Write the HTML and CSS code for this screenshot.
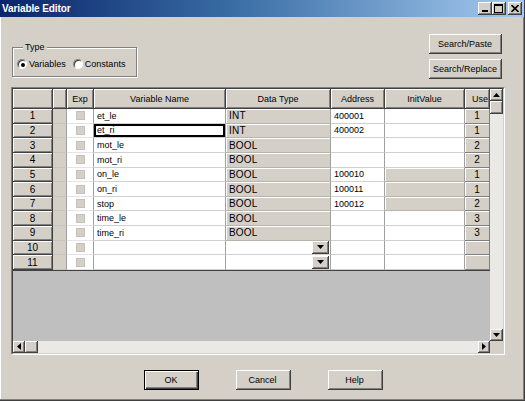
FILE: index.html
```html
<!DOCTYPE html>
<html>
<head>
<meta charset="utf-8">
<link rel="stylesheet" href="styles.css">
</head>
<body>
<div class="window">
  <div class="titlebar">
    <span class="title">Variable Editor</span>
    <div class="tbtns">
      <span class="tbtn"><svg width="8" height="7" viewBox="0 0 8 7"><rect x="1" y="5" width="6" height="2" fill="#000"/></svg></span>
      <span class="tbtn"><svg width="9" height="9" viewBox="0 0 9 9"><rect x="0.5" y="0.5" width="8" height="8" fill="none" stroke="#000"/><rect x="0" y="0" width="9" height="2" fill="#000"/></svg></span>
      <span class="tbtn close"><svg width="8" height="7" viewBox="0 0 8 7"><path d="M0.5 0 L7.5 7 M7.5 0 L0.5 7" stroke="#000" stroke-width="1.6"/></svg></span>
    </div>
  </div>

  <div class="top">
    <fieldset class="group">
      <legend>Type</legend>
      <div class="radios">
        <span class="radio"><span class="dot on"></span>Variables</span>
        <span class="radio"><span class="dot"></span>Constants</span>
      </div>
    </fieldset>
    <div class="sidebtns">
      <span class="btn">Search/Paste</span>
      <span class="btn">Search/Replace</span>
    </div>
  </div>

  <div class="sheet">
    <div class="sheet-in">
      <div class="cells">
        <div class="table">
          <div class="hd"></div><div class="hd"></div><div class="hd">Exp</div><div class="hd">Variable Name</div><div class="hd">Data Type</div><div class="hd">Address</div><div class="hd">InitValue</div><div class="hd left">Use</div>

          <div class="rh">1</div><div class="nr"></div><div class="exp"><i class="cb"></i></div><div class="w">et_le</div><div class="g dt">INT</div><div class="w">400001</div><div class="w"></div><div class="u">1</div>
          <div class="rh">2</div><div class="nr"></div><div class="exp"><i class="cb"></i></div><div class="w focus">et_ri</div><div class="g dt">INT</div><div class="w">400002</div><div class="w"></div><div class="u">1</div>
          <div class="rh">3</div><div class="nr"></div><div class="exp"><i class="cb"></i></div><div class="w">mot_le</div><div class="g dt">BOOL</div><div class="w"></div><div class="w"></div><div class="u">2</div>
          <div class="rh">4</div><div class="nr"></div><div class="exp"><i class="cb"></i></div><div class="w">mot_ri</div><div class="g dt">BOOL</div><div class="w"></div><div class="w"></div><div class="u">2</div>
          <div class="rh">5</div><div class="nr"></div><div class="exp"><i class="cb"></i></div><div class="w">on_le</div><div class="g dt">BOOL</div><div class="w">100010</div><div class="g"></div><div class="u">1</div>
          <div class="rh">6</div><div class="nr"></div><div class="exp"><i class="cb"></i></div><div class="w">on_ri</div><div class="g dt">BOOL</div><div class="w">100011</div><div class="g"></div><div class="u">1</div>
          <div class="rh">7</div><div class="nr"></div><div class="exp"><i class="cb"></i></div><div class="w">stop</div><div class="g dt">BOOL</div><div class="w">100012</div><div class="g"></div><div class="u">2</div>
          <div class="rh">8</div><div class="nr"></div><div class="exp"><i class="cb"></i></div><div class="w">time_le</div><div class="g dt">BOOL</div><div class="w"></div><div class="w"></div><div class="u">3</div>
          <div class="rh">9</div><div class="nr"></div><div class="exp"><i class="cb"></i></div><div class="w">time_ri</div><div class="g dt">BOOL</div><div class="w"></div><div class="w"></div><div class="u">3</div>
          <div class="rh">10</div><div class="nr"></div><div class="exp"><i class="cb"></i></div><div class="w"></div><div class="w combo"><span class="drop"><svg width="7" height="4" viewBox="0 0 7 4"><path d="M0 0 H7 L3.5 4 Z" fill="#000"/></svg></span></div><div class="w"></div><div class="w"></div><div class="u"></div>
          <div class="rh">11</div><div class="nr"></div><div class="exp"><i class="cb"></i></div><div class="w"></div><div class="w combo"><span class="drop"><svg width="7" height="4" viewBox="0 0 7 4"><path d="M0 0 H7 L3.5 4 Z" fill="#000"/></svg></span></div><div class="w"></div><div class="w"></div><div class="u"></div>
        </div>
      </div>
      <div class="vscroll">
        <span class="sbtn"><svg width="7" height="4" viewBox="0 0 7 4"><path d="M0 4 H7 L3.5 0 Z" fill="#000"/></svg></span>
        <span class="thumb v"></span>
        <span class="track"></span>
        <span class="sbtn"><svg width="7" height="4" viewBox="0 0 7 4"><path d="M0 0 H7 L3.5 4 Z" fill="#000"/></svg></span>
      </div>
      <div class="hscroll">
        <span class="sbtn"><svg width="4" height="7" viewBox="0 0 4 7"><path d="M4 0 V7 L0 3.5 Z" fill="#000"/></svg></span>
        <span class="thumb h"></span>
        <span class="track"></span>
        <span class="sbtn"><svg width="4" height="7" viewBox="0 0 4 7"><path d="M0 0 V7 L4 3.5 Z" fill="#000"/></svg></span>
      </div>
      <div class="corner"></div>
    </div>
  </div>

  <div class="bottom">
    <span class="btn wide default">OK</span>
    <span class="btn wide">Cancel</span>
    <span class="btn wide">Help</span>
  </div>
</div>
</body>
</html>
```

FILE: styles.css
```css
* { box-sizing: border-box; }
html, body { margin: 0; padding: 0; background: #d4d0c8; }
body { font-family: "Liberation Sans", Arial, sans-serif; font-size: 9px; color: #000; }

.window {
  width: 525px;
  height: 401px;
  background: #d4d0c8;
  display: flex;
  flex-direction: column;
  border-right: 1px solid #404040;
  border-bottom: 1px solid #404040;
  box-shadow: inset -1px -1px #808080, inset 1px 0 #fff;
}

.titlebar {
  height: 17px;
  flex: none;
  background: linear-gradient(90deg, #0a246a 0%, #3a6ea5 45%, #a6caf0 100%);
  display: flex;
  align-items: center;
  justify-content: space-between;
  padding: 0 2px 0 2px;
}
.title { color: #fff; font-weight: bold; font-size: 10px; letter-spacing: -0.1px; }
.tbtns { display: flex; gap: 0; }
.tbtn {
  width: 14px; height: 13px;
  background: #d4d0c8;
  border-right: 1px solid #404040; border-bottom: 1px solid #404040;
  box-shadow: inset 1px 1px #fff, inset -1px -1px #808080;
  display: flex; align-items: center; justify-content: center;
}
.tbtn.close { margin-left: 2px; }

.top {
  display: flex;
  justify-content: space-between;
  align-items: flex-start;
  padding: 17px 22px 0 12px;
  height: 70px;
  flex: none;
}
.group {
  margin: 8px 0 0 0;
  padding: 0 0 0 4px;
  width: 125px;
  height: 35px;
  border: 1px solid #808080;
  box-shadow: inset 1px 1px #fff, 1px 1px #fff;
}
.group legend {
  padding: 0 2px;
  margin-left: 6px;
  background: #d4d0c8;
  line-height: 10px;
}
.radios { display: flex; align-items: center; gap: 7px; margin-top: 7px; }
.radio { display: flex; align-items: center; gap: 2px; }
.dot {
  width: 10px; height: 10px; border-radius: 50%;
  background: #fff;
  border: 1px solid; border-color: #808080 #fff #fff #808080;
  box-shadow: inset 1px 1px #404040;
  position: relative;
}
.dot.on::after {
  content: ""; position: absolute; left: 2.5px; top: 2.5px;
  width: 4px; height: 4px; border-radius: 50%; background: #000;
}

.sidebtns { display: flex; flex-direction: column; gap: 5px; }
.btn {
  width: 73px; height: 20px;
  display: flex; align-items: center; justify-content: center;
  background: #d4d0c8;
  border-right: 1px solid #404040; border-bottom: 1px solid #404040;
  box-shadow: inset 1px 1px #fff, inset -1px -1px #808080;
}

.sheet {
  margin-left: 11px;
  width: 494px;
  height: 268px;
  flex: none;
  border: 1px solid; border-color: #808080 #fff #fff #808080;
}
.sheet-in {
  width: 100%; height: 100%;
  border: 1px solid; border-color: #404040 #d4d0c8 #d4d0c8 #404040;
  display: grid;
  grid-template-columns: 477px 13px;
  grid-template-rows: 252px 12px;
}
.cells { background: #bfbfbf; overflow: hidden; }
.table {
  display: grid;
  grid-template-columns: 40px 14px 27px 132px 105px 54px 80px 25px;
  grid-template-rows: 20px repeat(11, 14.65px);
  background: #fff;
  border-bottom: 1px solid #404040;
}
.table > div {
  display: flex; align-items: center;
  white-space: nowrap; overflow: hidden;
  padding-left: 3px;
}
.hd {
  background: #d4d0c8; justify-content: center; padding-left: 0 !important;
  border-right: 1px solid #404040; border-bottom: 1px solid #404040;
  box-shadow: inset 1px 1px #fff, inset -1px -1px #808080;
}
.hd.left { justify-content: flex-start; padding-left: 7px !important; }
.rh {
  background: #d4d0c8; justify-content: center; padding-left: 0 !important;
  font-size: 10px;
  border-right: 1px solid #404040; border-bottom: 1px solid #404040;
  box-shadow: inset 1px 1px #fff, inset -1px -1px #808080;
}
.nr { background: #d4d0c8; border-right: 1px solid #a0a0a0; border-bottom: 1px solid #c8c4bc; }
.exp { background: #fff; justify-content: center; padding-left: 0 !important; border-right: 1px solid #a0a0a0; border-bottom: 1px solid #e4e4e4; }
.cb { width: 9px; height: 9px; background: #d4d0c8; border: 1px solid #c4c1ba; display: block; }
.w { background: #fff; border-right: 1px solid #a0a0a0; border-bottom: 1px solid #d0d0d0; }
.g { background: #d4d0c8; border-right: 1px solid #a0a0a0; border-bottom: 1px solid #b8b4ac; box-shadow: inset 1px 1px #fff; }
.dt { font-size: 10px; letter-spacing: 0.2px; }
.u {
  background: #d4d0c8; justify-content: center; padding-left: 0 !important;
  font-size: 10px;
  border-right: 1px solid #808080; border-bottom: 1px solid #808080;
  box-shadow: inset 1px 1px #fff;
}
.focus { box-shadow: inset 0 0 0 2px #000; }
.combo { justify-content: flex-end; padding-right: 1px; }
.drop {
  width: 17px; height: 13px;
  background: #d4d0c8;
  border-right: 1px solid #404040; border-bottom: 1px solid #404040;
  box-shadow: inset 1px 1px #fff, inset -1px -1px #808080;
  display: flex; align-items: center; justify-content: center;
}

.vscroll { display: flex; flex-direction: column; background: #ebe9e5; }
.hscroll { display: flex; flex-direction: row; background: #ebe9e5; }
.corner { background: #d4d0c8; }
.track { flex: 1; }
.sbtn {
  flex: none; width: 13px; height: 12px;
  background: #d4d0c8;
  border-right: 1px solid #404040; border-bottom: 1px solid #404040;
  box-shadow: inset 1px 1px #fff, inset -1px -1px #808080;
  display: flex; align-items: center; justify-content: center;
}
.hscroll .sbtn { width: 12px; }
.thumb {
  flex: none;
  background: #d4d0c8;
  border-right: 1px solid #404040; border-bottom: 1px solid #404040;
  box-shadow: inset 1px 1px #fff, inset -1px -1px #808080;
}
.thumb.v { width: 13px; height: 13px; }
.thumb.h { width: 13px; height: 12px; }

.bottom {
  display: flex;
  justify-content: center;
  gap: 37px;
  padding-top: 15px;
  padding-left: 2px;
}
.btn.wide { width: 55px; height: 20px; }
.btn.default { border: 1px solid #000; box-shadow: inset 1px 1px #fff, inset -1px -1px #404040, inset -2px -2px #808080; }
```
